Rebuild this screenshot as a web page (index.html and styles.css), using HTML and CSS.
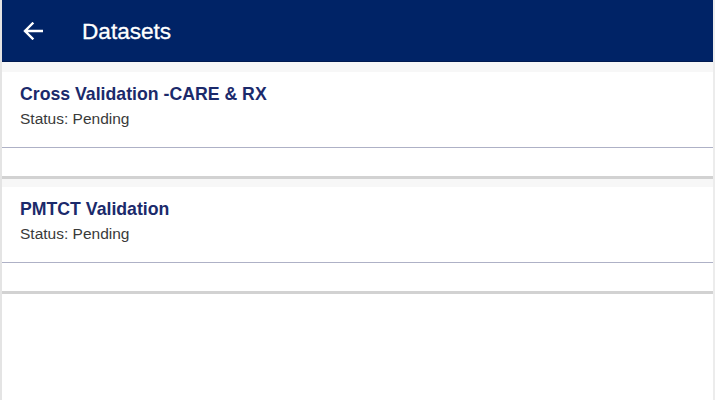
FILE: index.html
```html
<!DOCTYPE html>
<html lang="en">
<head>
    <meta charset="UTF-8">
    <meta name="viewport" content="width=device-width, initial-scale=1.0">
    <title>Datasets</title>
    <link rel="stylesheet" href="styles.css">
</head>
<body>
    <div class="app">
        <header class="toolbar">
            <span class="back-btn">
                <svg width="20" height="18" viewBox="0 0 20 18">
                    <path d="M19 9H2.5M9.5 1.5L2 9l7.5 7.5" fill="none" stroke="#fff" stroke-width="2.4" stroke-linecap="square"/>
                </svg>
            </span>
            <h1 class="toolbar-title">Datasets</h1>
        </header>
        <div class="list">
            <div class="card">
                <div class="card-body">
                    <div class="card-title">Cross Validation -CARE &amp; RX</div>
                    <div class="card-status">Status: Pending</div>
                </div>
                <div class="card-footer"></div>
            </div>
            <div class="card">
                <div class="card-body">
                    <div class="card-title">PMTCT Validation</div>
                    <div class="card-status">Status: Pending</div>
                </div>
                <div class="card-footer"></div>
            </div>
        </div>
    </div>
</body>
</html>
```

FILE: styles.css
```css
body {
    margin: 0;
    background: #fff;
    font-family: "Liberation Sans", Arial, sans-serif;
}
.app {
    width: 711px;
    height: 400px;
    border-left: 2px solid #e4e4e4;
    border-right: 2px solid #ececec;
}
.toolbar {
    height: 61px;
    background: #002366;
    border-bottom: 1px solid #001a50;
    display: flex;
    align-items: center;
}
.back-btn {
    display: flex;
    margin-left: 21px;
    width: 20px;
}
.toolbar-title {
    margin: 2px 0 0 39px;
    font-size: 22.6px;
    font-weight: normal;
    color: #fff;
    -webkit-text-stroke: 0.3px #fff;
}
.list {
    display: flex;
    flex-direction: column;
}
.card {
    border-top: 8px solid #f7f7f7;
    background: #fff;
}
.card:first-child {
    border-top-width: 10px;
}
.card-body {
    padding: 12px 18px 20px;
    border-bottom: 1px solid #aeb1c6;
}
.card-title {
    font-size: 17.7px;
    font-weight: bold;
    color: #1b2a6b;
    line-height: 20px;
}
.card-status {
    margin-top: 6px;
    font-size: 15.5px;
    color: #3a3a3a;
    line-height: 17px;
}
.card-footer {
    height: 28px;
    border-bottom: 3px solid #d2d2d2;
}
```
